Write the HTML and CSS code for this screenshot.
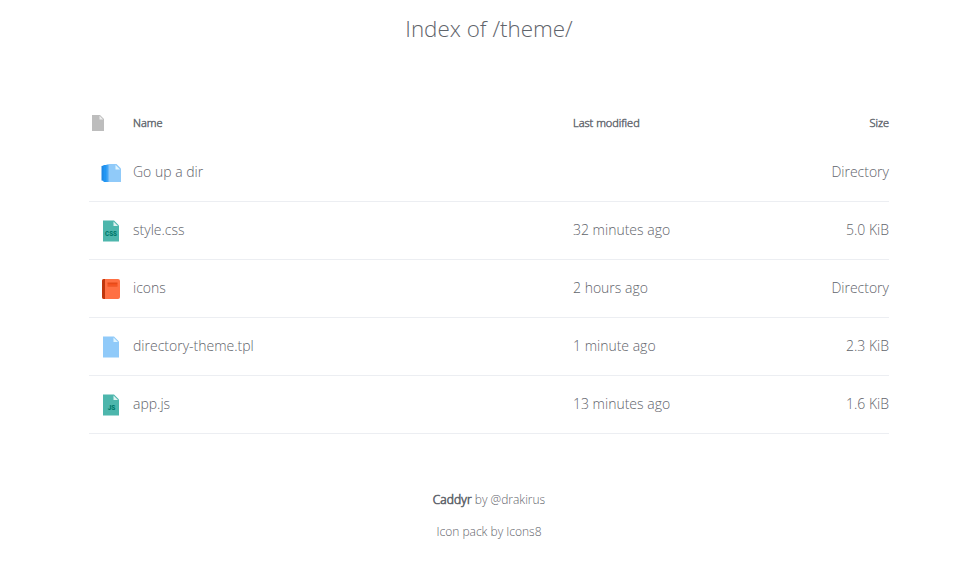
FILE: index.html
```html
<!DOCTYPE html>
<html lang="en">
<head>
<meta charset="utf-8">
<title>Index of /theme/</title>
<link rel="stylesheet" href="styles.css">
</head>
<body>
<header><h1>Index of /theme/</h1></header>
<main>
<div class="row head">
<span class="icon"><svg width="12" height="16" viewBox="0 0 12 16"><path fill="#bdbdbd" d="M0 0h8l4 4v12H0z"/><path fill="#eee" d="M7.500 .8v3.700h3.700z"/></svg></span>
<span>Name</span><span>Last modified</span><span class="size">Size</span>
</div>
<div class="row">
<span class="icon"><svg width="24" height="24" viewBox="0 0 48 48"><path fill="#1e88e5" d="M5 10l5-1v31l-5-1z"/><path fill="#2196f3" d="M9 8h9v34H9z"/><path fill="#42a5f5" d="M15 7h5v35h-5z"/><path fill="#90caf9" d="M19 6h16l9 9v27H19z"/><path fill="#e1f5fe" d="M33 8v9h9z"/></svg></span>
<a>Go up a dir</a><span></span><span class="size">Directory</span>
</div>
<div class="row">
<span class="icon"><svg width="24" height="24" viewBox="0 0 48 48"><path fill="#4db6ac" d="M8 3h22l10 10v32H8z"/><path fill="#e0f2f1" d="M29 5v9h9z"/><text class="tag" x="24" y="33" textLength="24" lengthAdjust="spacingAndGlyphs">CSS</text></svg></span>
<a>style.css</a><span>32 minutes ago</span><span class="size">5.0 KiB</span>
</div>
<div class="row">
<span class="icon"><svg width="24" height="24" viewBox="0 0 48 48"><rect x="6" y="4" width="36" height="40" rx="4" fill="#ff7043"/><path fill="#bf360c" d="M12 4v40h-2a4 4 0 0 1-4-4V8a4 4 0 0 1 4-4z"/><path fill="#e64a19" d="M17 11h20v3H17zM17 17h20v2H17z"/><path fill="#f4511e" d="M17 14h20v3H17z"/></svg></span>
<a>icons</a><span>2 hours ago</span><span class="size">Directory</span>
</div>
<div class="row">
<span class="icon"><svg width="24" height="24" viewBox="0 0 48 48"><path fill="#90caf9" d="M8 3h22l10 10v32H8z"/><path fill="#e1f5fe" d="M29 5v9h9z"/></svg></span>
<a>directory-theme.tpl</a><span>1 minute ago</span><span class="size">2.3 KiB</span>
</div>
<div class="row">
<span class="icon"><svg width="24" height="24" viewBox="0 0 48 48"><path fill="#4db6ac" d="M8 3h22l10 10v32H8z"/><path fill="#e0f2f1" d="M29 5v9h9z"/><text class="tag" x="25" y="33">JS</text></svg></span>
<a>app.js</a><span>13 minutes ago</span><span class="size">1.6 KiB</span>
</div>
</main>
<footer><p><b>Caddyr</b> by @drakirus</p><p>Icon pack by Icons8</p></footer>
</body>
</html>
```
FILE: styles.css
```css
* { box-sizing: border-box; }
body { margin: 0; background: #fff; color: #5f646b; font: 300 14px/20px "Open Sans", sans-serif; }
h1 { margin: 0; padding: 13px 0 0 1px; height: 101px; font-size: 22.4px; line-height: 32px; font-weight: 300; text-align: center; }
main { width: 800px; margin: 0 auto 0 89px; }
.row { display: grid; grid-template-columns: 44px 440px 1fr 120px; height: 58px; align-items: center; border-bottom: 1px solid #eceef2; }
.row > :not(.icon) { padding-bottom: 2px; }
.row.head { height: 43px; border: 0; font-size: 11px; -webkit-text-stroke: .5px #6a6f76; }
.row.head > :not(.icon) { padding-bottom: 0; }
.icon { display: flex; padding-left: 10px; }
.head .icon { padding-left: 3px; }
.head svg { -webkit-text-stroke: 0; }
.tag { fill: #00796b; font: 900 13px Roboto, sans-serif; text-anchor: middle; }
.size { text-align: right; }
footer { padding: 56px 0 0 1px; font-size: 12px; text-align: center; }
footer p { margin: 0 0 12px; }
footer b { font-weight: 300; letter-spacing: .1px; -webkit-text-stroke: .7px #646970; }
```
